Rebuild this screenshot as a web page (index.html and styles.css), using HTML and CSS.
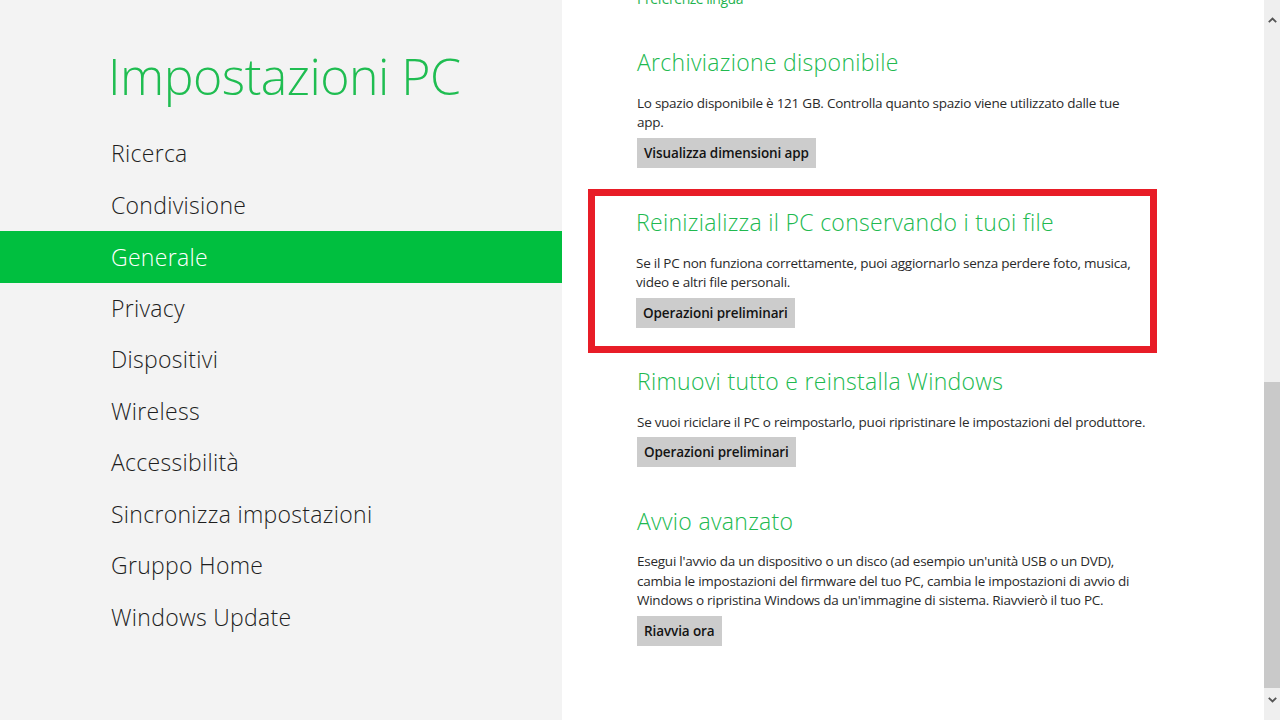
FILE: index.html
```html
<!DOCTYPE html>
<html lang="it">
<head>
<meta charset="utf-8">
<title>Impostazioni PC</title>
<link rel="stylesheet" href="styles.css">
</head>
<body>
<div class="app">
  <aside class="nav">
    <h1 class="nav-title">Impostazioni PC</h1>
    <ul class="nav-list">
      <li class="nav-item">Ricerca</li>
      <li class="nav-item">Condivisione</li>
      <li class="nav-item active">Generale</li>
      <li class="nav-item">Privacy</li>
      <li class="nav-item">Dispositivi</li>
      <li class="nav-item">Wireless</li>
      <li class="nav-item">Accessibilità</li>
      <li class="nav-item">Sincronizza impostazioni</li>
      <li class="nav-item">Gruppo Home</li>
      <li class="nav-item">Windows Update</li>
    </ul>
  </aside>
  <main class="content">
    <div class="link">Preferenze lingua</div>
    <section class="section first">
      <h2 class="section-title">Archiviazione disponibile</h2>
      <p class="section-text">Lo spazio disponibile è 121 GB. Controlla quanto spazio viene utilizzato dalle tue<br>app.</p>
      <button class="btn">Visualizza dimensioni app</button>
    </section>
    <section class="section highlight">
      <h2 class="section-title">Reinizializza il PC conservando i tuoi file</h2>
      <p class="section-text">Se il PC non funziona correttamente, puoi aggiornarlo senza perdere foto, musica,<br>video e altri file personali.</p>
      <button class="btn">Operazioni preliminari</button>
    </section>
    <section class="section after-box">
      <h2 class="section-title">Rimuovi tutto e reinstalla Windows</h2>
      <p class="section-text">Se vuoi riciclare il PC o reimpostarlo, puoi ripristinare le impostazioni del produttore.</p>
      <button class="btn">Operazioni preliminari</button>
    </section>
    <section class="section last">
      <h2 class="section-title">Avvio avanzato</h2>
      <p class="section-text">Esegui l'avvio da un dispositivo o un disco (ad esempio un'unità USB o un DVD),<br>cambia le impostazioni del firmware del tuo PC, cambia le impostazioni di avvio di<br>Windows o ripristina Windows da un'immagine di sistema. Riavvierò il tuo PC.</p>
      <button class="btn">Riavvia ora</button>
    </section>
  </main>
  <div class="scrollbar">
    <div class="sb-btn sb-up">
      <svg width="9" height="6" viewBox="0 0 9 6"><polyline points="0.8,5.2 4.5,1.5 8.2,5.2" fill="none" stroke="#555" stroke-width="1.8"/></svg>
    </div>
    <div class="sb-track"></div>
    <div class="sb-thumb"></div>
    <div class="sb-btn sb-down">
      <svg width="9" height="6" viewBox="0 0 9 6"><polyline points="0.8,0.8 4.5,4.5 8.2,0.8" fill="none" stroke="#555" stroke-width="1.8"/></svg>
    </div>
  </div>
</div>
</body>
</html>
```
FILE: styles.css
```css
* { box-sizing: border-box; }
html, body { margin: 0; padding: 0; }
body {
  width: 1280px;
  height: 720px;
  overflow: hidden;
  font-family: "Open Sans", "Noto Sans", "Liberation Sans", sans-serif;
  background: #ffffff;
}
.app {
  display: flex;
  height: 720px;
}
.nav {
  width: 562px;
  flex: none;
  background: #f3f3f3;
}
.nav-title {
  margin: 44px 0 0 0;
  padding-left: 108px;
  font-size: 50px;
  font-weight: 300;
  line-height: 64px;
  color: #1fbd51;
  letter-spacing: -0.5px;
}
.nav-list {
  list-style: none;
  margin: 20px 0 0 0;
  padding: 0;
}
.nav-item {
  height: 51.5px;
  line-height: 51.5px;
  padding-left: 111px;
  font-size: 23px;
  font-weight: 300;
  color: #1e1e1e;
  letter-spacing: 0.3px;
}
.nav-item.active {
  background: #00bf3f;
  color: #ffffff;
  line-height: 53px;
}
.content {
  flex: 1;
  padding-left: 75px;
  background: #ffffff;
  overflow: hidden;
}
.link {
  margin-top: -11px;
  font-size: 14px;
  line-height: 19.5px;
  color: #1fb34f;
  letter-spacing: -0.5px;
}
.section { margin-top: 39px; }
.section.first { margin-top: 37px; }
.section.highlight {
  margin-top: 21px;
  margin-left: -49px;
  width: 569px;
  border: 7px solid #e81d27;
  padding: 10px 0 18px 41px;
}
.section.after-box { margin-top: 12px; }
.section.last { margin-top: 38px; }
.section-title {
  margin: 0;
  font-size: 23px;
  font-weight: 300;
  line-height: 32px;
  color: #21b94f;
  letter-spacing: 0.3px;
}
.section-text {
  margin: 15px 0 5px 0;
  padding-top: 1px;
  font-size: 13.5px;
  line-height: 19.5px;
  color: #2a2a2a;
  letter-spacing: -0.25px;
  white-space: nowrap;
}
.section.last .section-text { padding-top: 0; }
.btn {
  display: block;
  height: 30px;
  padding: 0 7px;
  border: none;
  background: #cccccc;
  font-family: inherit;
  font-size: 13.5px;
  font-weight: 600;
  color: #141414;
  letter-spacing: -0.1px;
}
.scrollbar {
  width: 16px;
  flex: none;
  background: #efefef;
  display: flex;
  flex-direction: column;
}
.sb-btn {
  display: flex;
  justify-content: center;
  align-items: center;
}
.sb-up { height: 40px; }
.sb-track { flex: 1; }
.sb-thumb {
  height: 306px;
  background: #c9c9c9;
}
.sb-down {
  height: 32px;
  align-items: flex-start;
  padding-top: 9px;
}
```
